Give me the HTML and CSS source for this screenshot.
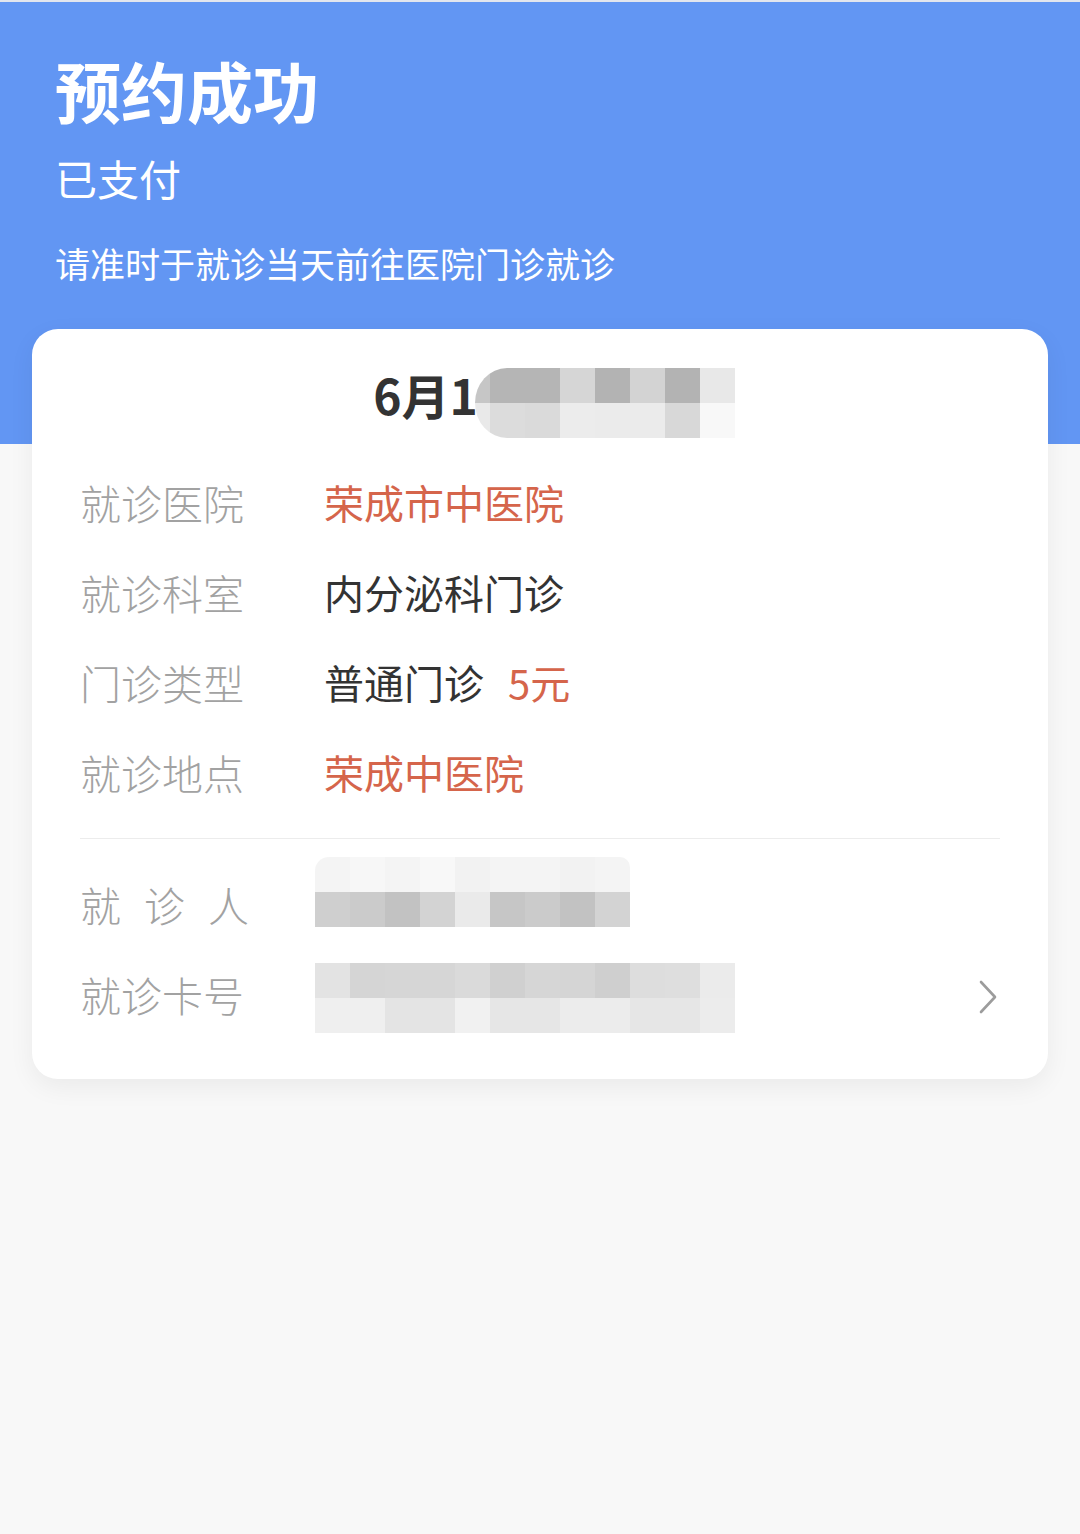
FILE: index.html
```html
<!DOCTYPE html>
<html lang="zh-CN">
<head>
<meta charset="utf-8">
<title>预约成功</title>
<link rel="stylesheet" href="styles.css">
</head>
<body>
<div class="page">
  <header class="hero">
    <h1 class="hero-title">预约成功</h1>
    <div class="hero-status">已支付</div>
    <div class="hero-tip">请准时于就诊当天前往医院门诊就诊</div>
  </header>

  <section class="card">
    <div class="date-row">
      <span class="date-text">6月1</span>
      <div class="mosaic mosaic-date">
        <div class="m-row d1"></div>
        <div class="m-row d2"></div>
      </div>
    </div>

    <div class="info-list">
      <div class="info-row">
        <span class="label">就诊医院</span>
        <span class="value accent">荣成市中医院</span>
      </div>
      <div class="info-row">
        <span class="label">就诊科室</span>
        <span class="value">内分泌科门诊</span>
      </div>
      <div class="info-row">
        <span class="label">门诊类型</span>
        <span class="value">普通门诊<span class="price">5元</span></span>
      </div>
      <div class="info-row">
        <span class="label">就诊地点</span>
        <span class="value accent">荣成中医院</span>
      </div>
    </div>

    <div class="divider"></div>

    <div class="info-list">
      <div class="info-row">
        <span class="label spaced">就诊人</span>
        <div class="mosaic mosaic-person">
          <div class="m-row p1"></div>
          <div class="m-row p2"></div>
        </div>
      </div>
      <div class="info-row">
        <span class="label">就诊卡号</span>
        <div class="mosaic mosaic-card">
          <div class="m-row c1"></div>
          <div class="m-row c2"></div>
        </div>
        <svg class="chevron" width="20" height="34" viewBox="0 0 20 34" aria-hidden="true">
          <polyline points="3,2 17,17 3,32" fill="none" stroke="#9c9c9c" stroke-width="2.6" stroke-linecap="round" stroke-linejoin="round"/>
        </svg>
      </div>
    </div>
  </section>
</div>
</body>
</html>
```

FILE: styles.css
```css
* {
  box-sizing: border-box;
}

html, body {
  margin: 0;
  padding: 0;
}

body {
  width: 1080px;
  min-height: 1534px;
  background: #f8f8f8;
  font-family: "Noto Sans CJK SC", "Noto Sans", "Liberation Sans", sans-serif;
  color: #333333;
}

.page {
  width: 1080px;
}

.hero {
  height: 444px;
  background: #6296f3;
  border-top: 2px solid #e2e6ee;
  padding: 54px 0 0 55px;
  color: #ffffff;
}

.hero-title {
  margin: 0;
  font-size: 66px;
  line-height: 66px;
  font-weight: 700;
  letter-spacing: 0;
}

.hero-status {
  margin-top: 35px;
  font-size: 42px;
  line-height: 42px;
  font-weight: 400;
}

.hero-tip {
  margin-top: 46px;
  font-size: 35px;
  line-height: 35px;
  font-weight: 400;
}

.card {
  position: relative;
  margin: -115px 32px 0;
  background: #ffffff;
  border-radius: 26px;
  box-shadow: 0 8px 26px rgba(0, 0, 0, 0.06);
  padding: 39px 48px 40px;
}

.date-row {
  display: flex;
  justify-content: center;
  align-items: flex-start;
  padding-left: 28px;
  height: 70px;
}

.date-text {
  font-size: 48px;
  line-height: 56px;
  margin-top: -2px;
  margin-right: -3px;
  font-weight: 700;
  color: #333333;
}

.mosaic {
  display: flex;
  flex-direction: column;
}

.m-row {
  height: 35px;
}

.mosaic-date {
  width: 260px;
  border-radius: 32px 0 0 32px / 35px 0 0 35px;
  overflow: hidden;
}

.d1 {
  background: linear-gradient(to right,
    #c6c6c6 0 15px, #b5b5b5 15px 85px, #d6d6d6 85px 120px,
    #b3b3b3 120px 155px, #d3d3d3 155px 190px, #b3b3b3 190px 225px, #e8e8e8 225px 260px);
}

.d2 {
  background: linear-gradient(to right,
    #e9e9e9 0 15px, #dcdcdc 15px 50px, #dadada 50px 85px, #ececec 85px 120px,
    #ebebeb 120px 190px, #d8d8d8 190px 225px, #f8f8f8 225px 260px);
}

.info-list {
  display: flex;
  flex-direction: column;
}

.date-row + .info-list {
  margin-top: 19px;
}

.info-row {
  display: flex;
  align-items: center;
  height: 90px;
}

.label {
  width: 244px;
  flex: none;
  font-size: 41px;
  line-height: 41px;
  font-weight: 300;
  color: #a2a2a2;
}

.label.spaced {
  letter-spacing: 23px;
}

.value {
  font-size: 40px;
  line-height: 41px;
  color: #333333;
}

.value.accent {
  color: #d5654b;
}

.price {
  color: #d5654b;
  margin-left: 24px;
}

.divider {
  height: 1px;
  background: #ececec;
  margin-top: 21px;
  margin-bottom: 20px;
}

.mosaic-person {
  width: 315px;
  align-self: flex-start;
  margin-top: -2px;
  margin-left: -9px;
}

.p1 {
  background: linear-gradient(to right,
    #f4f4f4 0 35px, #f7f7f7 35px 70px, #f4f4f4 70px 105px, #f8f8f8 105px 140px,
    #f2f2f2 140px 175px, #f4f4f4 175px 245px, #f2f2f2 245px 280px, #f4f4f4 280px 315px);
  border-radius: 14px 10px 0 0;
}

.p2 {
  background: linear-gradient(to right,
    #cfcfcf 0 35px, #cbcbcb 35px 70px, #c2c2c2 70px 105px, #d3d3d3 105px 140px,
    #eaeaea 140px 175px, #c6c6c6 175px 210px, #cbcbcb 210px 245px, #c2c2c2 245px 280px, #d3d3d3 280px 315px);
}

.mosaic-card {
  width: 420px;
  margin-left: -9px;
  margin-top: 8px;
}

.c1 {
  background: linear-gradient(to right,
    #e3e3e3 0 35px, #d5d5d5 35px 70px, #d6d6d6 70px 140px, #dadada 140px 175px,
    #d0d0d0 175px 210px, #d6d6d6 210px 245px, #d5d5d5 245px 280px, #cfcfcf 280px 315px,
    #dddddd 315px 350px, #dedede 350px 385px, #ebebeb 385px 420px);
}

.c2 {
  background: linear-gradient(to right,
    #efefef 0 70px, #e4e4e4 70px 140px, #f1f1f1 140px 175px, #e6e6e6 175px 245px,
    #ececec 245px 315px, #e6e6e6 315px 385px, #ececec 385px 420px);
}

.chevron {
  margin-left: auto;
  margin-right: 2px;
  margin-top: 6px;
  flex: none;
}
```
